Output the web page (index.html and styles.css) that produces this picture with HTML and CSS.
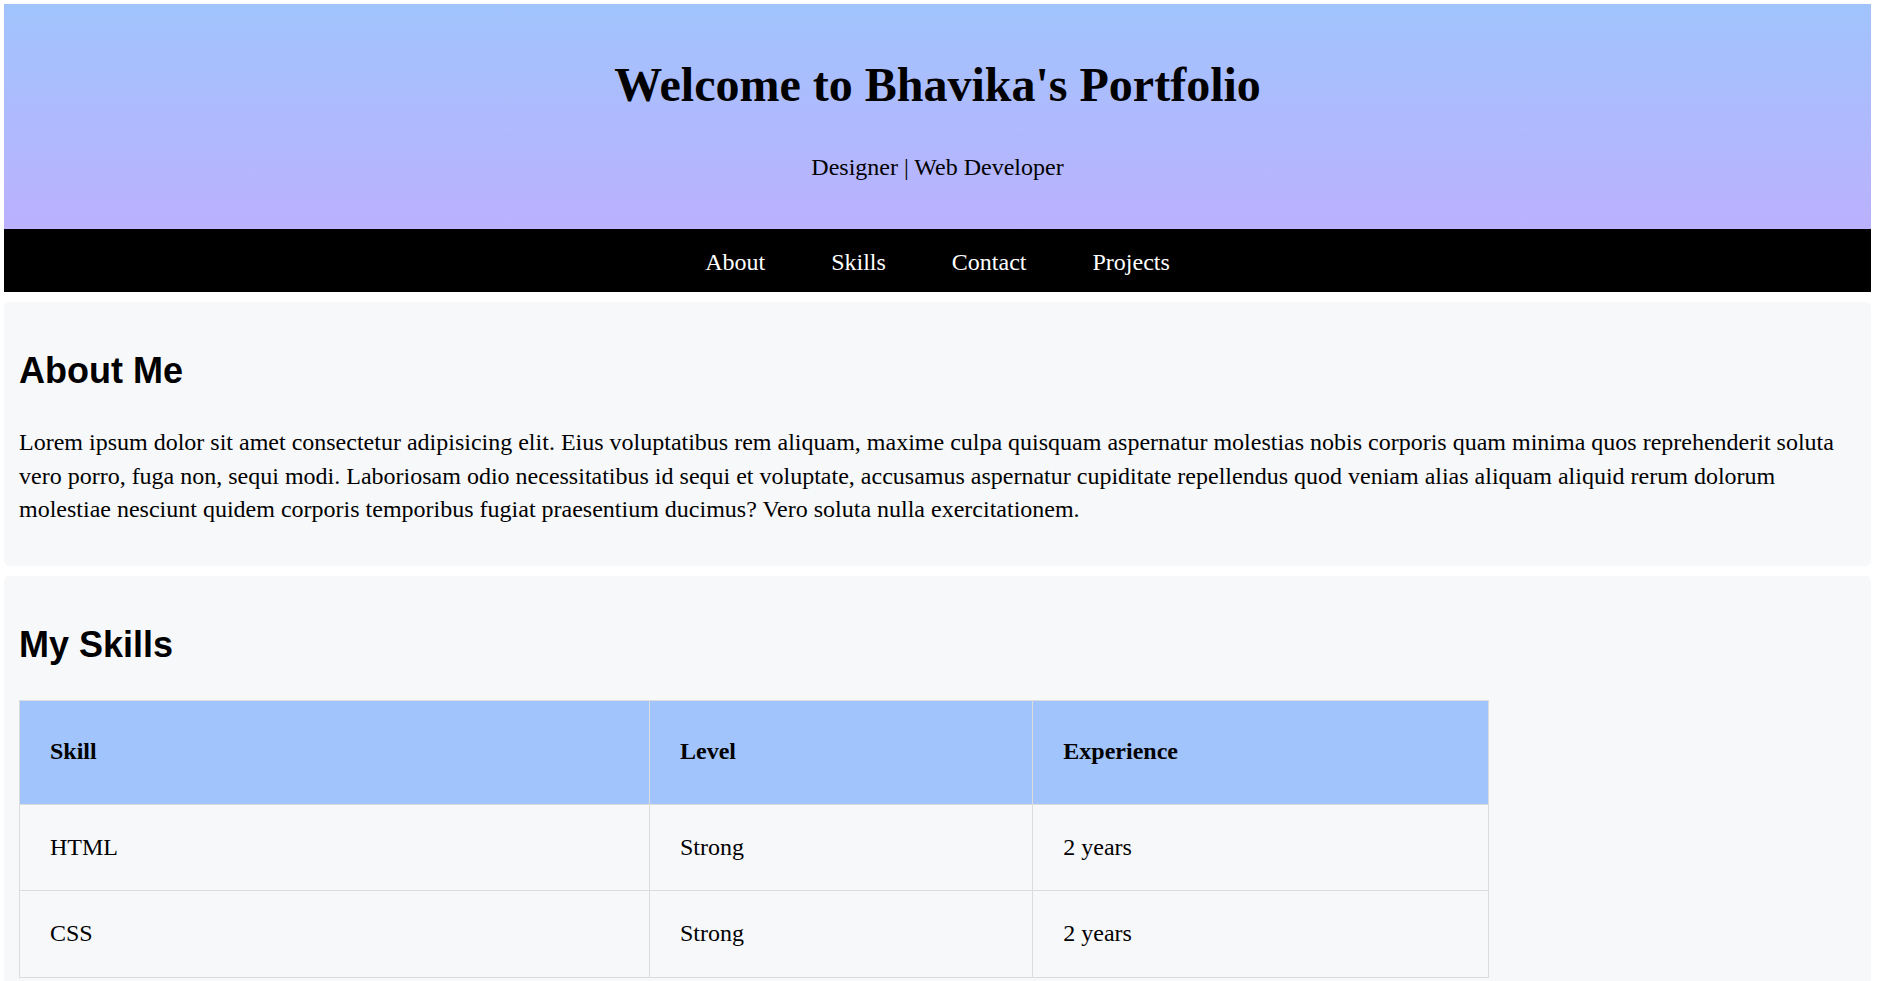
FILE: index.html
```html
<!DOCTYPE html>
<html lang="en">
<head>
<meta charset="utf-8">
<title>Bhavika's Portfolio</title>
<link rel="stylesheet" href="styles.css">
</head>
<body>
  <header class="site-header">
    <h1 class="site-title">Welcome to Bhavika's Portfolio</h1>
    <p class="site-tagline">Designer | Web Developer</p>
  </header>
  <nav class="site-nav">
    <a class="nav-link" href="#about">About</a>
    <a class="nav-link" href="#skills">Skills</a>
    <a class="nav-link" href="#contact">Contact</a>
    <a class="nav-link" href="#projects">Projects</a>
  </nav>
  <main class="content">
    <section class="panel" id="about">
      <h2 class="panel-title">About Me</h2>
      <p class="panel-text">Lorem ipsum dolor sit amet consectetur adipisicing elit. Eius voluptatibus rem aliquam, maxime culpa quisquam aspernatur molestias nobis corporis quam minima quos reprehenderit soluta vero porro, fuga non, sequi modi. Laboriosam odio necessitatibus id sequi et voluptate, accusamus aspernatur cupiditate repellendus quod veniam alias aliquam aliquid rerum dolorum molestiae nesciunt quidem corporis temporibus fugiat praesentium ducimus? Vero soluta nulla exercitationem.</p>
    </section>
    <section class="panel" id="skills">
      <h2 class="panel-title">My Skills</h2>
      <table class="skills-table">
        <thead>
          <tr>
            <th class="col-skill">Skill</th>
            <th class="col-level">Level</th>
            <th class="col-exp">Experience</th>
          </tr>
        </thead>
        <tbody>
          <tr>
            <td>HTML</td>
            <td>Strong</td>
            <td>2 years</td>
          </tr>
          <tr>
            <td>CSS</td>
            <td>Strong</td>
            <td>2 years</td>
          </tr>
        </tbody>
      </table>
    </section>
  </main>
</body>
</html>
```

FILE: styles.css
```css
html {
  background: #ffffff;
}

body {
  margin: 4px 14px 0 4px;
  font-family: "Liberation Serif", "Times New Roman", serif;
  font-size: 24px;
  line-height: 1.4;
  color: #000;
}

.site-header {
  background: linear-gradient(to bottom, #a1c4fd, #bbb1fe);
  text-align: center;
  padding: 15px 0 21px;
}

.site-title {
  font-size: 2em;
  font-weight: bold;
  margin: 0.67em 0;
}

.site-tagline {
  margin: 1em 0;
}

.site-nav {
  background: #000;
  display: flex;
  justify-content: center;
  gap: 66px;
  padding: 17px 0 12px;
}

.nav-link {
  color: #fff;
  text-decoration: none;
}

.content {
  display: flex;
  flex-direction: column;
  gap: 10px;
  margin-top: 10px;
}

.panel {
  background: #f7f8fa;
  border-radius: 5px;
  padding: 15px;
}

.panel-title {
  font-family: "Liberation Sans", Arial, sans-serif;
  font-size: 36px;
  font-weight: bold;
  margin: 29px 0 30px;
}

.panel-text {
  margin: 0 0 24px;
}

.skills-table {
  width: 80%;
  border-collapse: collapse;
  text-align: left;
}

.skills-table th,
.skills-table td {
  border: 1px solid #dcdcdc;
  padding: 26px 30px;
}

.skills-table th {
  background: #a1c4fd;
  padding-top: 34px;
  padding-bottom: 35px;
}

.col-skill { width: 42.9%; }
.col-level { width: 26.1%; }
.col-exp { width: 31%; }
```
